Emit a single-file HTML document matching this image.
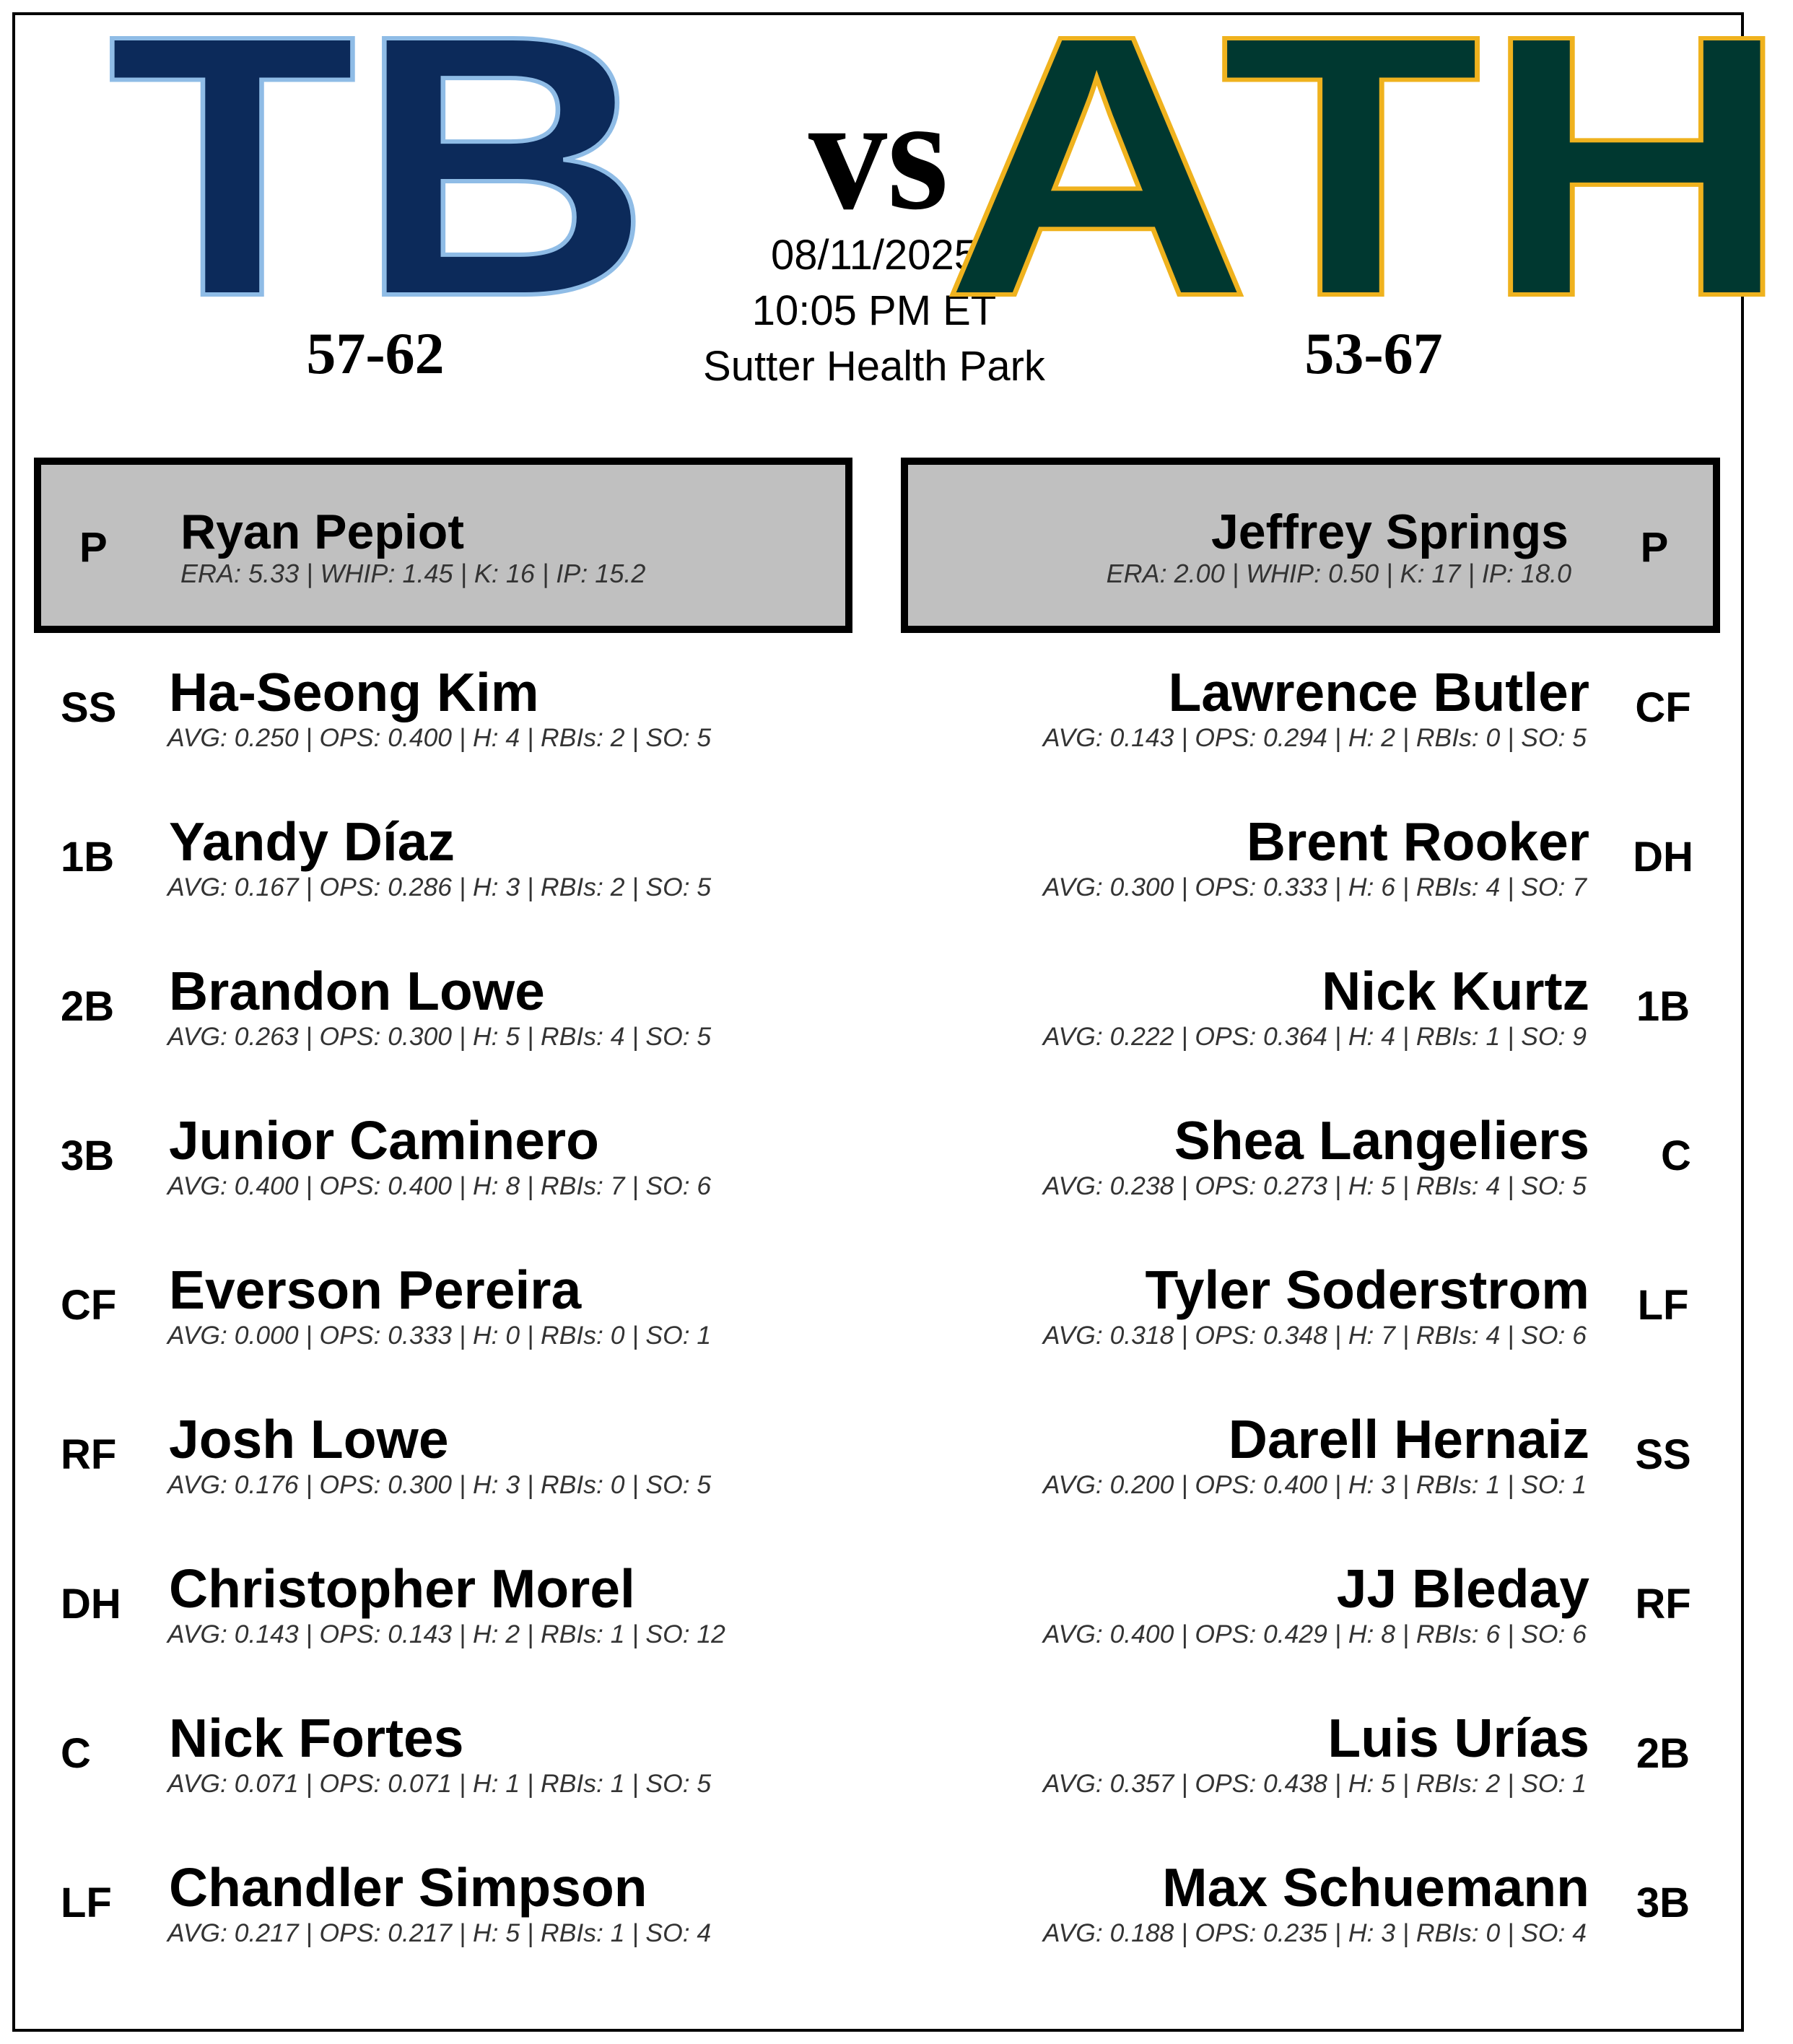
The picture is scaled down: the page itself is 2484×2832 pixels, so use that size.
<!DOCTYPE html>
<html><head><meta charset="utf-8"><style>
html,body{margin:0;padding:0;background:#fff;}
svg{display:block;}
.n{font-family:"Liberation Sans",sans-serif;font-weight:bold;font-size:75px;fill:#000;}
.s{font-family:"Liberation Sans",sans-serif;font-style:italic;font-size:35.5px;fill:#333;}
.p{font-family:"Liberation Sans",sans-serif;font-weight:bold;font-size:58px;fill:#000;}
.c{font-family:"Liberation Sans",sans-serif;font-size:58px;fill:#000;}
.r{font-family:"Liberation Serif",serif;font-weight:bold;font-size:82px;fill:#000;}
</style></head><body>
<svg width="2484" height="2832" viewBox="0 0 2484 2832" xmlns="http://www.w3.org/2000/svg">
<rect x="0" y="0" width="2484" height="2832" fill="#fff"/>
<rect x="19" y="19" width="2395" height="2794" fill="none" stroke="#000" stroke-width="4"/>
<text x="149" y="408" font-family="Liberation Sans, sans-serif" font-weight="bold" font-size="516" fill="#0c2a5a" stroke="#8fbce6" stroke-width="6" textLength="754" lengthAdjust="spacingAndGlyphs">TB</text>
<text x="1120" y="288" font-family="Liberation Serif, serif" font-weight="bold" font-size="225" fill="#000" textLength="194" lengthAdjust="spacingAndGlyphs">vs</text>
<text class="c" x="1211" y="373" text-anchor="middle">08/11/2025</text>
<text class="c" x="1211" y="450" text-anchor="middle">10:05 PM ET</text>
<text class="c" x="1211" y="527" text-anchor="middle">Sutter Health Park</text>
<text x="1305" y="408" font-family="Liberation Sans, sans-serif" font-weight="bold" font-size="516" fill="#003830" stroke="#efb21e" stroke-width="6" textLength="1177" lengthAdjust="spacingAndGlyphs">ATH</text>
<text class="r" x="520" y="517" text-anchor="middle">57-62</text>
<text class="r" x="1903" y="517" text-anchor="middle">53-67</text>

<rect x="52" y="639" width="1124" height="233" fill="#c0c0c0" stroke="#000" stroke-width="10"/>
<rect x="1253" y="639" width="1125" height="233" fill="#c0c0c0" stroke="#000" stroke-width="10"/>
<text class="p" x="110" y="778">P</text>
<text class="n" x="250" y="760" style="font-size:68px">Ryan Pepiot</text>
<text class="s" x="250" y="807" style="font-size:36px">ERA: 5.33 | WHIP: 1.45 | K: 16 | IP: 15.2</text>
<text class="p" x="2292" y="778" text-anchor="middle">P</text>
<text class="n" x="2173" y="760" text-anchor="end" style="font-size:68px">Jeffrey Springs</text>
<text class="s" x="2177" y="807" text-anchor="end" style="font-size:36px">ERA: 2.00 | WHIP: 0.50 | K: 17 | IP: 18.0</text>

<g>
<text class="p" x="84" y="1000">SS</text><text class="n" x="234" y="985">Ha-Seong Kim</text><text class="s" x="232" y="1034">AVG: 0.250 | OPS: 0.400 | H: 4 | RBIs: 2 | SO: 5</text>
<text class="p" x="84" y="1207">1B</text><text class="n" x="234" y="1192">Yandy Díaz</text><text class="s" x="232" y="1241">AVG: 0.167 | OPS: 0.286 | H: 3 | RBIs: 2 | SO: 5</text>
<text class="p" x="84" y="1414">2B</text><text class="n" x="234" y="1399">Brandon Lowe</text><text class="s" x="232" y="1448">AVG: 0.263 | OPS: 0.300 | H: 5 | RBIs: 4 | SO: 5</text>
<text class="p" x="84" y="1621">3B</text><text class="n" x="234" y="1606">Junior Caminero</text><text class="s" x="232" y="1655">AVG: 0.400 | OPS: 0.400 | H: 8 | RBIs: 7 | SO: 6</text>
<text class="p" x="84" y="1828">CF</text><text class="n" x="234" y="1813">Everson Pereira</text><text class="s" x="232" y="1862">AVG: 0.000 | OPS: 0.333 | H: 0 | RBIs: 0 | SO: 1</text>
<text class="p" x="84" y="2035">RF</text><text class="n" x="234" y="2020">Josh Lowe</text><text class="s" x="232" y="2069">AVG: 0.176 | OPS: 0.300 | H: 3 | RBIs: 0 | SO: 5</text>
<text class="p" x="84" y="2242">DH</text><text class="n" x="234" y="2227">Christopher Morel</text><text class="s" x="232" y="2276">AVG: 0.143 | OPS: 0.143 | H: 2 | RBIs: 1 | SO: 12</text>
<text class="p" x="84" y="2449">C</text><text class="n" x="234" y="2434">Nick Fortes</text><text class="s" x="232" y="2483">AVG: 0.071 | OPS: 0.071 | H: 1 | RBIs: 1 | SO: 5</text>
<text class="p" x="84" y="2656">LF</text><text class="n" x="234" y="2641">Chandler Simpson</text><text class="s" x="232" y="2690">AVG: 0.217 | OPS: 0.217 | H: 5 | RBIs: 1 | SO: 4</text>
</g>
<g>
<text class="p" x="2304" y="1000" text-anchor="middle">CF</text><text class="n" x="2202" y="985" text-anchor="end">Lawrence Butler</text><text class="s" x="2198" y="1034" text-anchor="end">AVG: 0.143 | OPS: 0.294 | H: 2 | RBIs: 0 | SO: 5</text>
<text class="p" x="2304" y="1207" text-anchor="middle">DH</text><text class="n" x="2202" y="1192" text-anchor="end">Brent Rooker</text><text class="s" x="2198" y="1241" text-anchor="end">AVG: 0.300 | OPS: 0.333 | H: 6 | RBIs: 4 | SO: 7</text>
<text class="p" x="2304" y="1414" text-anchor="middle">1B</text><text class="n" x="2202" y="1399" text-anchor="end">Nick Kurtz</text><text class="s" x="2198" y="1448" text-anchor="end">AVG: 0.222 | OPS: 0.364 | H: 4 | RBIs: 1 | SO: 9</text>
<text class="p" x="2322" y="1621" text-anchor="middle">C</text><text class="n" x="2202" y="1606" text-anchor="end">Shea Langeliers</text><text class="s" x="2198" y="1655" text-anchor="end">AVG: 0.238 | OPS: 0.273 | H: 5 | RBIs: 4 | SO: 5</text>
<text class="p" x="2304" y="1828" text-anchor="middle">LF</text><text class="n" x="2202" y="1813" text-anchor="end">Tyler Soderstrom</text><text class="s" x="2198" y="1862" text-anchor="end">AVG: 0.318 | OPS: 0.348 | H: 7 | RBIs: 4 | SO: 6</text>
<text class="p" x="2304" y="2035" text-anchor="middle">SS</text><text class="n" x="2202" y="2020" text-anchor="end">Darell Hernaiz</text><text class="s" x="2198" y="2069" text-anchor="end">AVG: 0.200 | OPS: 0.400 | H: 3 | RBIs: 1 | SO: 1</text>
<text class="p" x="2304" y="2242" text-anchor="middle">RF</text><text class="n" x="2202" y="2227" text-anchor="end">JJ Bleday</text><text class="s" x="2198" y="2276" text-anchor="end">AVG: 0.400 | OPS: 0.429 | H: 8 | RBIs: 6 | SO: 6</text>
<text class="p" x="2304" y="2449" text-anchor="middle">2B</text><text class="n" x="2202" y="2434" text-anchor="end">Luis Urías</text><text class="s" x="2198" y="2483" text-anchor="end">AVG: 0.357 | OPS: 0.438 | H: 5 | RBIs: 2 | SO: 1</text>
<text class="p" x="2304" y="2656" text-anchor="middle">3B</text><text class="n" x="2202" y="2641" text-anchor="end">Max Schuemann</text><text class="s" x="2198" y="2690" text-anchor="end">AVG: 0.188 | OPS: 0.235 | H: 3 | RBIs: 0 | SO: 4</text>
</g>
</svg>
</body></html>
